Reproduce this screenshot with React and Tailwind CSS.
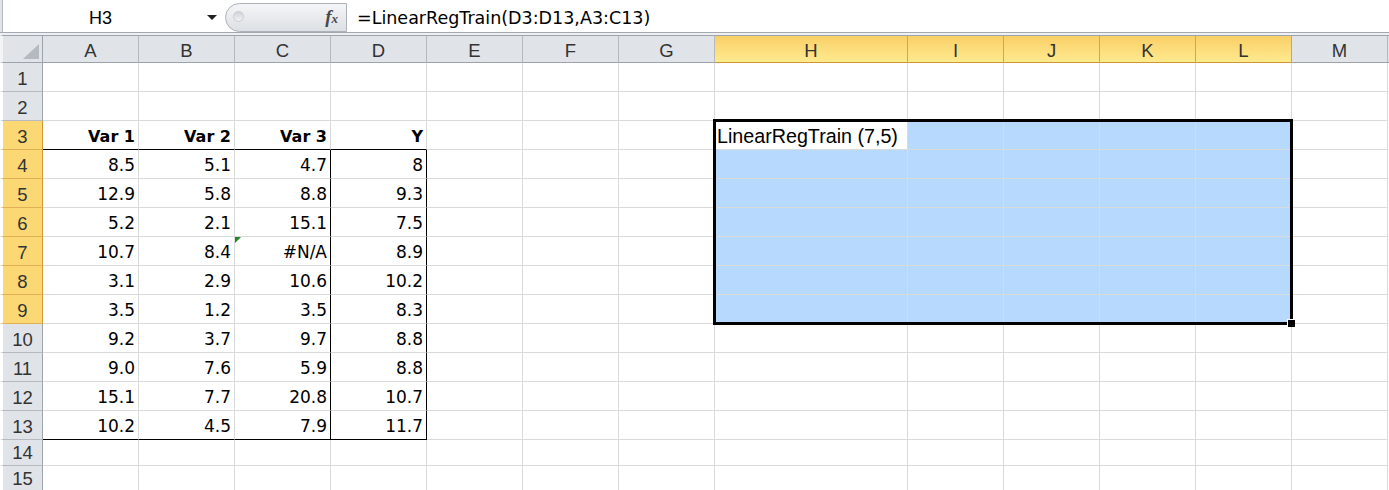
import React from "react";

const COLS = ["A", "B", "C", "D", "E", "F", "G", "H", "I", "J", "K", "L", "M"];

const DATA = {
  3: ["Var 1", "Var 2", "Var 3", "Y"],
  4: ["8.5", "5.1", "4.7", "8"],
  5: ["12.9", "5.8", "8.8", "9.3"],
  6: ["5.2", "2.1", "15.1", "7.5"],
  7: ["10.7", "8.4", "#N/A", "8.9"],
  8: ["3.1", "2.9", "10.6", "10.2"],
  9: ["3.5", "1.2", "3.5", "8.3"],
  10: ["9.2", "3.7", "9.7", "8.8"],
  11: ["9.0", "7.6", "5.9", "8.8"],
  12: ["15.1", "7.7", "20.8", "10.7"],
  13: ["10.2", "4.5", "7.9", "11.7"],
};

const ROWS = Array.from({ length: 15 }, (_, i) => i + 1);

function FormulaBar() {
  return (
    <div className="flex h-[33px] border-b border-[#a3a9b0] bg-white">
      <div className="w-[3px] bg-[#e1e4e8] border-r border-[#b4b9bf]" />
      <div className="w-[195px] pt-[8px] leading-[20px] text-[18px] text-center font-['Liberation_Sans',Arial,sans-serif] text-black">
        H3
      </div>
      <div className="w-[27px] flex justify-center pt-[15px]">
        <svg width="10" height="5" viewBox="0 0 10 5">
          <polygon points="0,0 10,0 5,5" fill="#222" />
        </svg>
      </div>
      <div className="relative w-[122px] h-[29px] mt-[3px] rounded-l-[15px] border border-[#adb2b8] bg-linear-to-b from-[#f4f5f7] to-[#dde0e4]">
        <div className="absolute left-[7px] top-[7px] w-[11px] h-[11px] rounded-full border border-[#c9cdd2] bg-linear-to-b from-[#cfd3d8] to-[#f1f2f4]" />
        <div className="absolute right-[8px] top-[3px] leading-[20px] font-['Liberation_Serif',serif] italic font-bold text-[#4a4a4a]">
          <span className="text-[19px]">f</span>
          <span className="text-[13px]">x</span>
        </div>
      </div>
      <div className="flex-1 pl-[10px] pt-[8px] leading-[20px] text-[17.5px] font-['DejaVu_Sans',sans-serif] text-black whitespace-nowrap">
        =LinearRegTrain(D3:D13,A3:C13)
      </div>
    </div>
  );
}

function HeaderRow() {
  return (
    <>
      <div className="relative h-[28px] border-t border-b border-r border-l-[3px] border-t-[#9da3aa] border-b-[#9da3aa] border-r-[#9da3aa] border-l-[#f3f4f6] bg-[#e0e3e8]">
        <svg className="absolute right-[3px] bottom-[3px]" width="16" height="15" viewBox="0 0 16 15">
          <polygon points="16,0 16,15 0,15" fill="#b5bac0" />
        </svg>
      </div>
      {COLS.map((c, i) => {
        const sel = i >= 7 && i <= 11;
        return sel ? (
          <div
            key={c}
            className="h-[28px] border-t border-b border-r border-t-[#9da3aa] border-b-[#d09535] border-r-[#d2a456] bg-linear-to-b from-[#f9cf66] to-[#ffea8f] flex items-center justify-center pt-[3px] leading-[20px] text-[18.5px] text-[#333] font-['Liberation_Sans',Arial,sans-serif]"
          >
            {c}
          </div>
        ) : (
          <div
            key={c}
            className="h-[28px] border-t border-b border-r border-t-[#9da3aa] border-b-[#9da3aa] border-r-[#b6bac0] bg-[#e0e3e8] flex items-center justify-center pt-[3px] leading-[20px] text-[18.5px] text-[#333] font-['Liberation_Sans',Arial,sans-serif]"
          >
            {c}
          </div>
        );
      })}
      <div className="h-[28px] border-t border-b border-t-[#9da3aa] border-b-[#9da3aa] bg-[#e0e3e8]" />
    </>
  );
}

function RowHeader({ r }) {
  const sel = r >= 3 && r <= 9;
  const tall = r <= 13;
  const h = tall ? "h-[29px]" : "h-[26px]";
  return sel ? (
    <div
      className={`${h} border-b border-r border-l-[3px] border-l-white border-b-[#e0b057] border-r-[#d3982f] bg-[#fbd873] flex items-end justify-center pb-[2px] leading-[20px] text-[18.5px] text-[#333] font-['Liberation_Sans',Arial,sans-serif]`}
    >
      {r}
    </div>
  ) : (
    <div
      className={`${h} border-b border-r border-l-[3px] border-l-white border-b-[#b6bac0] border-r-[#9da3aa] bg-[#e0e3e8] flex items-end justify-center pb-[2px] leading-[20px] text-[18.5px] text-[#333] font-['Liberation_Sans',Arial,sans-serif]`}
    >
      {r}
    </div>
  );
}

function Cell({ r, ci }) {
  const tall = r <= 13;
  const h = tall ? "h-[29px]" : "h-[26px]";
  const isSel = r >= 3 && r <= 9 && ci >= 7 && ci <= 11;
  const isActive = r === 3 && ci === 7;
  const bg = isSel && !isActive ? "bg-[#b7d9fd]" : "bg-white";
  const blackR = (ci === 2 || ci === 3) && r >= 4 && r <= 13;
  const blackB = (r === 3 || r === 13) && ci <= 3;
  const br = blackR ? "border-r-black" : "border-r-[#d8dadc]";
  const bb = blackB ? "border-b-black" : "border-b-[#d8dadc]";
  const val = DATA[r] && ci <= 3 ? DATA[r][ci] : null;
  const bold = r === 3;

  return (
    <div className={`relative ${h} border-r border-b ${br} ${bb} ${bg} flex items-end justify-end overflow-visible`}>
      {isActive && (
        <div className="absolute left-[2px] bottom-[2px] leading-[22px] text-[19.7px] whitespace-nowrap font-['Liberation_Sans',Arial,sans-serif] text-black">
          LinearRegTrain (7,5)
        </div>
      )}
      {val !== null &&
        (bold ? (
          <span className="pr-[3px] pb-[2px] leading-[20px] text-[16px] font-bold font-['DejaVu_Sans',sans-serif] text-black whitespace-nowrap">
            {val}
          </span>
        ) : (
          <span className="pr-[3px] pb-[3px] leading-[20px] text-[17px] font-['DejaVu_Sans',sans-serif] text-black whitespace-nowrap">
            {val}
          </span>
        ))}
      {r === 7 && ci === 2 && (
        <svg className="absolute left-0 top-0" width="6" height="6" viewBox="0 0 6 6">
          <polygon points="0,0 6,0 0,6" fill="#1c8a1c" />
        </svg>
      )}
    </div>
  );
}

function Sheet() {
  return (
    <div className="relative grid grid-cols-[43px_repeat(7,96px)_193px_repeat(5,96px)_1fr]">
      <HeaderRow />
      {ROWS.map((r) => (
        <React.Fragment key={r}>
          <RowHeader r={r} />
          {COLS.map((c, ci) => (
            <Cell key={c} r={r} ci={ci} />
          ))}
          <div className={r <= 13 ? "h-[29px] bg-white" : "h-[26px] bg-white"} />
        </React.Fragment>
      ))}
      {/* selection border */}
      <div className="absolute left-[713px] top-[84px] w-[580px] h-[206px] border-[3px] border-black pointer-events-none" />
      {/* fill handle */}
      <div className="absolute left-[1287px] top-[284px] w-[8px] h-[8px] bg-black border-l border-t border-white" />
    </div>
  );
}

export default function App() {
  return (
    <div className="w-[1389px] h-[490px] overflow-hidden bg-white">
      <FormulaBar />
      <div className="h-[2px] bg-[#eef0f3]" />
      <Sheet />
    </div>
  );
}
